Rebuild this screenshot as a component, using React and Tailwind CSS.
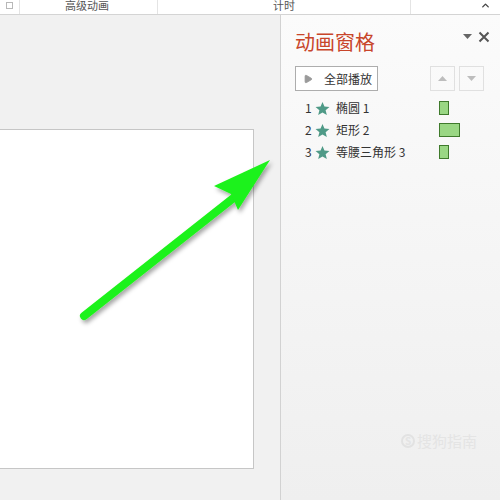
import { Play, ChevronUp } from 'lucide-react';

const cjk = { fontFamily: '"Microsoft YaHei", "Noto Sans CJK SC", "Liberation Sans", sans-serif' };

const items = [
    { n: 1, name: '椭圆 1', bar: 'w-[10px]' },
    { n: 2, name: '矩形 2', bar: 'w-[21px]' },
    { n: 3, name: '等腰三角形 3', bar: 'w-[10px]' },
];

function Star() {
    return (
        <svg width="15" height="15" viewBox="0 0 24 24" className="text-[#4f9a87]">
            <path fill="currentColor" d="M12 1.5l3.1 7.4 8 .6-6.1 5.2 1.9 7.8L12 18.3l-6.9 4.2 1.9-7.8L.9 9.5l8-.6z" />
        </svg>
    );
}

export default function App() {
    return (
        <div className="relative w-[500px] h-[500px] flex flex-col overflow-hidden bg-[#f1f1f1]" style={cjk}>
            {/* ribbon bottom strip */}
            <div className="h-[15px] flex items-center bg-white border-b border-[#d4d4d4] text-[11px] text-[#555] leading-none">
                <div className="w-[20px] h-full flex items-start justify-center border-r border-[#e4e4e4]">
                    <div className="w-[7px] h-[7px] mt-[2px] border border-[#b8b8b8]" />
                </div>
                <div className="w-[138px] h-full flex items-start pl-[45px] border-r border-[#e4e4e4] whitespace-nowrap">高级动画</div>
                <div className="w-[253px] h-full flex items-start pl-[115px] border-r border-[#e4e4e4] whitespace-nowrap">计时</div>
                <div className="flex-1 h-full flex items-start justify-end pr-[9px]">
                    <ChevronUp size={11} strokeWidth={3} className="text-[#444]" />
                </div>
            </div>

            <div className="flex-1 flex">
                {/* slide area */}
                <div className="w-[280px] flex flex-col pt-[114px]">
                    <div className="w-[254px] h-[340px] bg-white border border-l-0 border-[#c6c6c6]" />
                </div>

                {/* animation pane */}
                <div className="w-[220px] border-l border-[#d2d2d2] bg-gradient-to-b from-[#fbfbfb] to-[#efefef] pl-[14px] pr-[10px] pt-[13px]">
                    <div className="flex items-center justify-between h-[28px]">
                        <span className="text-[20px] text-[#c8452a] leading-none">动画窗格</span>
                        <div className="flex items-center gap-[6px] -mt-[10px] text-[#555]">
                            <svg width="9" height="6" viewBox="0 0 9 6"><path d="M0 0h9L4.5 5z" fill="#666" /></svg>
                            <svg width="12" height="12" viewBox="0 0 12 12"><path d="M1.5 1.5l9 9M10.5 1.5l-9 9" stroke="#555" strokeWidth="2" /></svg>
                        </div>
                    </div>
                    <div className="flex items-center justify-between mt-[10px] pr-[6px]">
                        <div className="w-[83px] h-[25px] border border-[#adadad] bg-white flex items-center pl-[7px] gap-[11px] text-[12px] text-[#333] whitespace-nowrap">
                            <Play size={10} className="text-[#9a9a9a] fill-[#9a9a9a]" />
                            <span>全部播放</span>
                        </div>
                        <div className="flex gap-[4px]">
                            <div className="w-[25px] h-[25px] border border-[#e0e0e0] flex items-center justify-center">
                                <svg width="9" height="5" viewBox="0 0 9 5"><path d="M0 5h9L4.5 0z" fill="#bdbdbd" /></svg>
                            </div>
                            <div className="w-[25px] h-[25px] border border-[#e0e0e0] flex items-center justify-center">
                                <svg width="9" height="5" viewBox="0 0 9 5"><path d="M0 0h9L4.5 5z" fill="#bdbdbd" /></svg>
                            </div>
                        </div>
                    </div>
                    <div className="mt-[10px] flex flex-col gap-[8px] pl-[10px]">
                        {items.map((it) => (
                            <div key={it.n} className="flex items-center h-[14px] text-[12px] text-[#333]">
                                <span className="w-[10px]">{it.n}</span>
                                <Star />
                                <span className="ml-[6px] w-[103px] whitespace-nowrap">{it.name}</span>
                                <div className={`${it.bar} h-[14px] bg-[#9ad784] border border-[#3f7a2c]`} />
                            </div>
                        ))}
                    </div>
                    <div className="mt-[274px] ml-[106px] text-[#e4e4e4] text-[15px] leading-none flex items-center gap-[2px]">
                        <span className="w-[14px] h-[14px] rounded-full border-2 border-[#e2e2e2] text-[10px] flex items-center justify-center font-bold">S</span>
                        <span>搜狗指南</span>
                    </div>
                </div>
            </div>

            {/* green arrow annotation */}
            <svg className="absolute left-0 top-0 pointer-events-none" width="500" height="500">
                <defs>
                    <filter id="sh" x="-20%" y="-20%" width="140%" height="140%">
                        <feDropShadow dx="2" dy="3" stdDeviation="2" floodColor="#000" floodOpacity="0.35" />
                    </filter>
                </defs>
                <g filter="url(#sh)">
                    <line x1="84" y1="316" x2="236" y2="196" stroke="#1ef21a" strokeWidth="8" strokeLinecap="round" />
                    <path d="M270 160 L214 186 L231 194 L238 210 Z" fill="#1ef21a" />
                </g>
            </svg>
        </div>
    );
}
